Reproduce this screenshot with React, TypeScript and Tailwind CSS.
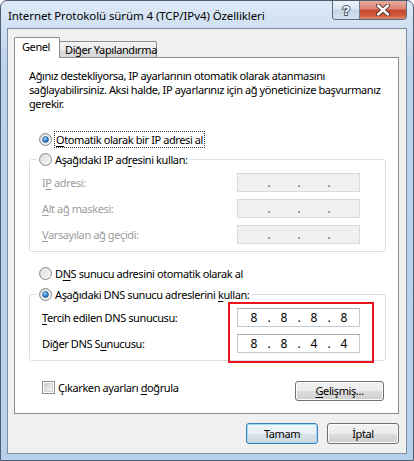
import React from "react";

function U({ children }: { children: React.ReactNode }) {
  return <span className="underline decoration-1 underline-offset-[2px]">{children}</span>;
}

function Radio({ checked, id }: { checked?: boolean; id: string }) {
  return (
    <svg width="13" height="13" viewBox="0 0 13 13" className="shrink-0">
      <defs>
        <linearGradient id={id + "o"} x1="0" y1="0" x2="1" y2="1">
          <stop offset="0" stopColor="#c9c9c9" />
          <stop offset="1" stopColor="#fbfbfb" />
        </linearGradient>
        <linearGradient id={id + "i"} x1="0" y1="0" x2="1" y2="1">
          <stop offset="0" stopColor="#dcdcdc" />
          <stop offset="1" stopColor="#f8f8f8" />
        </linearGradient>
        <radialGradient id={id + "d"} cx="0.4" cy="0.35" r="0.75">
          <stop offset="0" stopColor="#a8dcfa" />
          <stop offset="0.55" stopColor="#2f7fcf" />
          <stop offset="1" stopColor="#164a86" />
        </radialGradient>
      </defs>
      <circle cx="6.5" cy="6.5" r="6" fill={`url(#${id}o)`} stroke="#8b8d8f" />
      <circle cx="6.5" cy="6.5" r="4.2" fill={`url(#${id}i)`} stroke="#f4f4f4" strokeWidth="0.8" />
      {checked && <circle cx="6.5" cy="6.5" r="3" fill={`url(#${id}d)`} stroke="#235c9e" strokeWidth="0.6" />}
    </svg>
  );
}

function Checkbox() {
  return (
    <div className="flex h-[13px] w-[13px] shrink-0 items-center justify-center border border-[#8e8f8f] bg-white">
      <div className="h-[9px] w-[9px] border border-[#d4d4d4] bg-[linear-gradient(135deg,#cbcbcb_0%,#e9e9e9_60%,#f6f6f6_100%)]" />
    </div>
  );
}

function IpField({ values, disabled }: { values?: string[]; disabled?: boolean }) {
  const segs = values ?? ["", "", "", ""];
  return (
    <div
      className={
        disabled
          ? "flex h-[19px] w-[123px] shrink-0 items-center border border-[#d9d9d9] bg-[#f0f0f0] pl-[3px] text-[#555555]"
          : "flex h-[19px] w-[123px] shrink-0 items-center border border-[#c6c9ce] border-t-[#abadb3] bg-white pl-[3px] text-black"
      }
    >
      {segs.map((v, i) => (
        <React.Fragment key={i}>
          <span className="w-[26px] text-center text-[12px] leading-[17px] tracking-normal">{v}</span>
          {i < 3 && <span className="w-[4px] text-center text-[12px] leading-[17px] tracking-normal">.</span>}
        </React.Fragment>
      ))}
    </div>
  );
}

function FieldRow({ label, children, disabled }: { label: React.ReactNode; children: React.ReactNode; disabled?: boolean }) {
  return (
    <div className="flex items-center">
      <div className={disabled ? "w-[195px] whitespace-nowrap text-[#9c9c9c]" : "w-[195px] whitespace-nowrap text-black"}>{label}</div>
      {children}
    </div>
  );
}

function Btn({ children, focus, w }: { children: React.ReactNode; focus?: boolean; w: string }) {
  return (
    <div
      className={
        focus
          ? `${w} flex h-[21px] items-center justify-center rounded-[3px] border border-[#3c7fb1] bg-[linear-gradient(180deg,#f1f6f9_0%,#e8eef3_50%,#dae3ea_50%,#ccd7e0_100%)] shadow-[inset_0_0_0_1px_#9fdcf8]`
          : `${w} flex h-[21px] items-center justify-center rounded-[3px] border border-[#707070] bg-[linear-gradient(180deg,#f2f2f2_0%,#ebebeb_50%,#dddddd_50%,#cfcfcf_100%)] shadow-[inset_0_0_0_1px_#fbfbfb]`
      }
    >
      {children}
    </div>
  );
}

export default function App() {
  return (
    <div className="flex h-[461px] w-[414px] flex-col overflow-hidden rounded-t-[7px] border border-[#4d5d72] bg-[linear-gradient(180deg,#dde9f6_0%,#cfe0f2_28px,#bcd3ec_60px,#b8d0ea_100%)] font-['Noto_Sans',sans-serif] text-[11px] leading-[14px] tracking-[-0.4px] text-black">
      {/* Title bar */}
      <div className="flex h-[27px] shrink-0 items-start justify-between">
        <div className="whitespace-nowrap pl-[7px] pt-[8px] text-[11.5px] leading-[14px] tracking-[-0.1px] text-black">
          Internet Protokolü sürüm 4 (TCP/IPv4) Özellikleri
        </div>
        <div className="mr-[6px] flex h-[19px] overflow-hidden rounded-b-[4px] border border-t-0 border-[#5b6a7c]">
          <div className="flex w-[27px] items-center justify-center border-r border-[#6f7d8d] bg-[linear-gradient(180deg,#eef4fb_0%,#dbe6f2_45%,#c6d5e6_50%,#d3e1ef_100%)]">
            <svg width="12" height="14" viewBox="0 0 12 14">
              <text x="6" y="12" textAnchor="middle" fontFamily="Liberation Sans, sans-serif" fontWeight="bold" fontSize="13" fill="#ffffff" stroke="#4c5b6e" strokeWidth="2" paintOrder="stroke">?</text>
            </svg>
          </div>
          <div className="flex w-[46px] items-center justify-center bg-[linear-gradient(180deg,#e9a99c_0%,#d98574_45%,#c4452f_50%,#d05a3f_80%,#e08a68_100%)]">
            <svg width="14" height="12" viewBox="0 0 14 12">
              <path d="M2 1.5 L12 10.5 M12 1.5 L2 10.5" stroke="#4a2a26" strokeWidth="4.2" strokeLinecap="round" />
              <path d="M2 1.5 L12 10.5 M12 1.5 L2 10.5" stroke="#ffffff" strokeWidth="2.4" strokeLinecap="round" />
            </svg>
          </div>
        </div>
      </div>

      {/* Client */}
      <div className="mx-[6px] mb-[6px] flex flex-1 flex-col border border-[#7c8da2] bg-[#f0f0f0] pt-[8px]">
        {/* Tabs */}
        <div className="relative z-10 -mb-px ml-[6px] flex items-end">
          <div className="flex h-[21px] w-[46px] items-start rounded-t-[2px] border border-b-0 border-[#898c95] bg-white pl-[7px] pt-[2px]">Genel</div>
          <div className="mb-px flex h-[16px] w-[97px] items-center whitespace-nowrap rounded-tr-[2px] border border-b-0 border-l-0 border-[#898c95] bg-[linear-gradient(180deg,#f3f3f3_0%,#ebebeb_50%,#dedede_50%,#d7d7d7_100%)] pl-[5px]">
            Diğer Yapılandırma
          </div>
        </div>

        {/* Panel */}
        <div className="ml-[6px] flex w-[385px] flex-col border border-[#898c95] bg-white pb-[12px]">
          <div className="ml-[14px] mt-[11px] whitespace-nowrap">
            Ağınız destekliyorsa, IP ayarlarının otomatik olarak atanmasını
            <br />
            sağlayabilirsiniz. Aksi halde, IP ayarlarınız için ağ yöneticinize başvurmanız
            <br />
            gerekir.
          </div>

          <div className="ml-[24px] mt-[20px] flex h-[17px] items-center">
            <Radio checked id="r1" />
            <span className="ml-[2px] whitespace-nowrap border border-dotted border-[#333] px-[1px] leading-[15px]">
              <U>O</U>tomatik olarak bir IP adresi al
            </span>
          </div>

          <fieldset className="ml-[14px] mt-[3px] w-[357px] rounded-[3px] border border-[#d5dfe5] pb-[7px]">
            <legend className="ml-[7px] px-[2px]">
              <div className="flex h-[17px] items-center bg-white">
                <Radio id="r2" />
                <span className="ml-[3px] whitespace-nowrap">
                  Aşağıdaki IP ad<U>r</U>esini kullan:
                </span>
              </div>
            </legend>
            <div className="mt-[5px] flex flex-col gap-[7px] pl-[12px]">
              <FieldRow disabled label={<>I<U>P</U> adresi:</>}>
                <IpField disabled />
              </FieldRow>
              <FieldRow disabled label={<><U>A</U>lt ağ maskesi:</>}>
                <IpField disabled />
              </FieldRow>
              <FieldRow disabled label={<><U>V</U>arsayılan ağ geçidi:</>}>
                <IpField disabled />
              </FieldRow>
            </div>
          </fieldset>

          <div className="ml-[24px] mt-[13px] flex h-[17px] items-center">
            <Radio id="r3" />
            <span className="ml-[3px] whitespace-nowrap">
              D<U>N</U>S sunucu adresini otomatik olarak al
            </span>
          </div>

          <fieldset className="ml-[14px] mt-[4px] w-[357px] rounded-[3px] border border-[#d5dfe5] pb-[7px]">
            <legend className="ml-[7px] px-[2px]">
              <div className="flex h-[17px] items-center bg-white">
                <Radio checked id="r4" />
                <span className="ml-[3px] whitespace-nowrap">
                  Aşağıdaki DNS sunucu adreslerini <U>k</U>ullan:
                </span>
              </div>
            </legend>
            <div className="relative mt-[5px] flex flex-col gap-[7px] pl-[12px]">
              <FieldRow label={<><U>T</U>ercih edilen DNS sunucusu:</>}>
                <IpField values={["8", "8", "8", "8"]} />
              </FieldRow>
              <FieldRow label={<>Diğer DNS S<U>u</U>nucusu:</>}>
                <IpField values={["8", "8", "4", "4"]} />
              </FieldRow>
              <div className="pointer-events-none absolute left-[198px] top-[-6px] h-[61px] w-[146px] border-2 border-[#e8141b]" />
            </div>
          </fieldset>

          <div className="ml-[27px] mr-[14px] mt-[20px] flex items-start justify-between">
            <div className="flex h-[13px] items-center">
              <Checkbox />
              <span className="ml-[3px] whitespace-nowrap">
                Çıkarken ayarları <U>d</U>oğrula
              </span>
            </div>
            <div className="flex h-[20px] w-[89px] items-center justify-center rounded-[3px] border border-[#707070] bg-[linear-gradient(180deg,#f2f2f2_0%,#ebebeb_50%,#dddddd_50%,#cfcfcf_100%)] shadow-[inset_0_0_0_1px_#fbfbfb]">
              <span>
                <U>G</U>elişmiş...
              </span>
            </div>
          </div>
        </div>

        {/* Bottom buttons */}
        <div className="mt-[9px] flex w-[391px] justify-end gap-[9px]">
          <Btn focus w="w-[72px]">Tamam</Btn>
          <Btn w="w-[72px]">İptal</Btn>
        </div>
      </div>
    </div>
  );
}
